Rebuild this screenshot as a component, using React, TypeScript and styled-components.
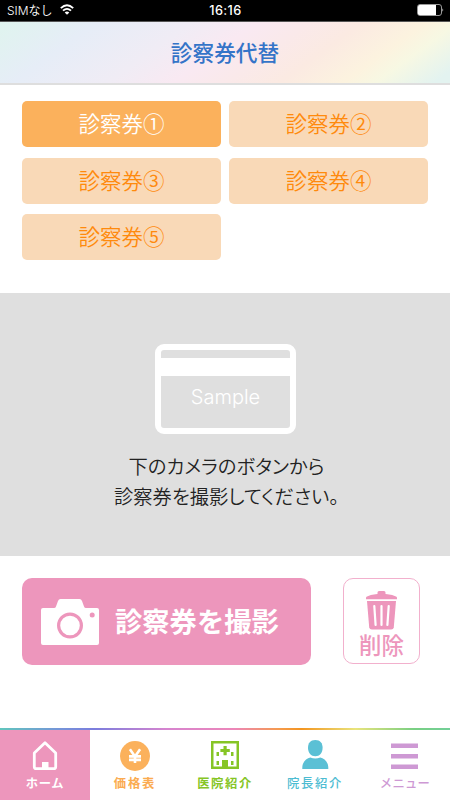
import React, { useState } from "react";
import styled, { createGlobalStyle } from "styled-components";

const GlobalStyle = createGlobalStyle`
  * { box-sizing: border-box; }
  body { margin: 0; background: #fff; }
  button { font: inherit; border: 0; margin: 0; padding: 0; background: none; cursor: pointer; }
  svg { display: block; flex: none; }
`;

const Screen = styled.div`
  width: 450px;
  height: 800px;
  display: flex;
  flex-direction: column;
  overflow: hidden;
  background: #fff;
  font-family: "Noto Sans CJK JP", sans-serif;
`;

const StatusBar = styled.div`
  height: 22px;
  flex: none;
  display: grid;
  grid-template-columns: 1fr auto 1fr;
  align-items: center;
  padding: 0 6px 0 7px;
  background: #000;
  border-bottom: 1px solid #555;
  color: #fff;
  font-family: Inter, "Noto Sans CJK JP", sans-serif;
  font-size: 12px;
  line-height: 21px;
`;

const Carrier = styled.div`
  display: flex;
  align-items: center;
  gap: 7px;
  font-size: 12px;
  font-weight: 350;

  svg {
    margin-top: -2px;
  }
`;

const Clock = styled.div`
  font-weight: 500;
  font-size: 12.7px;
  letter-spacing: 0.4px;
`;

const Battery = styled.div`
  display: flex;
  justify-content: flex-end;
  padding-bottom: 1px;
`;

const Header = styled.header`
  height: 63px;
  flex: none;
  display: flex;
  align-items: center;
  justify-content: center;
  padding-bottom: 2px;
  border-bottom: 2px solid #dedede;
  background: linear-gradient(144deg, #dff4ee 0%, #e6edf7 18%, #f0ecf5 36%, #f9e9f2 48%, #fae9ea 58%, #fbeae2 68%, #fcf3df 80%, #f7f8e3 86%, #e3f3f0 97%);
`;

const Title = styled.h1`
  margin: 0;
  color: #3474c8;
  font-size: 21.7px;
  font-weight: 500;
  line-height: 30px;
`;

const TabGrid = styled.div`
  height: 208px;
  flex: none;
  display: grid;
  grid-template-columns: 199px 199px;
  grid-auto-rows: 46px;
  column-gap: 8px;
  row-gap: 10.5px;
  padding: 16px 22px 0;
`;

const Tab = styled.button<{ $active: boolean }>`
  padding-bottom: 2px;
  border-radius: 5px;
  background: ${(p) => (p.$active ? "#fbb15c" : "#f9d9b7")};
  color: ${(p) => (p.$active ? "#fff" : "#ff8a0c")};
  font-size: 21.5px;
  font-weight: 350;
  line-height: 44px;
`;

const Preview = styled.section`
  height: 263px;
  flex: none;
  display: flex;
  flex-direction: column;
  align-items: center;
  padding-top: 51px;
  background: #dfdfdf;
`;

const CardFrame = styled.div`
  width: 141px;
  height: 90px;
  display: flex;
  flex-direction: column;
  border: 6px solid #fff;
  border-radius: 9px;
  color: #fff;
`;

const CardStripe = styled.div`
  height: 18px;
  margin-top: 8px;
  flex: none;
  background: #fff;
`;

const CardLabel = styled.div`
  padding-left: 1px;
  text-align: center;
  font-family: Inter, sans-serif;
  font-size: 20px;
  font-weight: 300;
  line-height: 42px;
`;

const Hint = styled.p`
  margin: 18px 0 0;
  padding-left: 3px;
  color: #222;
  text-align: center;
  font-size: 19.3px;
  font-weight: 350;
  line-height: 29.5px;
  font-feature-settings: "palt";
  white-space: nowrap;
`;

const Actions = styled.div`
  flex: 1;
  display: flex;
  align-items: flex-start;
  justify-content: space-between;
  padding: 22px 30px 0 22px;
`;

const ShootButton = styled.button`
  width: 289px;
  height: 87px;
  display: flex;
  align-items: center;
  gap: 16px;
  padding-left: 19px;
  border-radius: 10px;
  background: #ed96bc;
  color: #fff;
  font-size: 27.3px;
  font-weight: 700;
`;

const ShootLabel = styled.span`
  padding-bottom: 3px;
`;

const DeleteButton = styled.button`
  width: 77px;
  height: 86px;
  display: flex;
  flex-direction: column;
  align-items: center;
  padding-top: 12px;
  border: 1px solid #f2b0cd;
  border-radius: 10px;
  color: #ed96bc;
  font-size: 22.4px;
  font-weight: 500;
  line-height: 29px;
`;

const Rainbow = styled.div`
  height: 2px;
  flex: none;
  background: linear-gradient(90deg, #61c6bd 0%, #7595d8 13%, #7b7ddd 21%, #d684cf 37%, #ec86b9 52%, #f59a4d 62%, #f39520 67%, #e9e47c 79%, #79cf83 92%, #72cf98 100%);
`;

const Nav = styled.nav`
  height: 70px;
  flex: none;
  display: grid;
  grid-template-columns: repeat(5, 90px);
`;

const NavItem = styled.button<{ $color: string; $active?: boolean }>`
  display: flex;
  flex-direction: column;
  align-items: center;
  padding-top: 9px;
  color: ${(p) => p.$color};
  background: ${(p) => (p.$active ? "#ed96bc" : "#fff")};
`;

const NavLabel = styled.span<{ $spacing: number; $weight: number }>`
  margin-top: 2px;
  font-size: 12.3px;
  font-weight: ${(p) => p.$weight};
  line-height: 18px;
  letter-spacing: ${(p) => p.$spacing}px;
  white-space: nowrap;
`;

const WifiIcon = () => (
  <svg width="14" height="11" viewBox="0 0 14 11" fill="none" stroke="#fff" strokeWidth="1.8">
    <path d="M.8 4.2Q7-1.6 13.2 4.2M3 6.7q4-3.7 8 0" />
    <path d="M4.7 8.5q2.3-2 4.6 0L7 10.8z" fill="#fff" stroke="none" />
  </svg>
);

const BatteryIcon = () => (
  <svg width="27" height="12" viewBox="0 0 27 12">
    <rect x=".5" y=".5" width="24" height="11" rx="2.5" fill="none" stroke="#999" />
    <path d="M2.5 1H19v10H2.5Q1 11 1 9.500V2.500Q1 1 2.500 1z" fill="#fff" />
    <path d="M25.500 4.200q1.500 1.800 0 3.600z" fill="#fff" />
  </svg>
);

const CameraIcon = () => (
  <svg width="58" height="46" viewBox="0 0 58 46">
    <path d="M2 9h11q1.500 0 2-1.500L17 2q.7-2 2.500-2h19q1.800 0 2.500 2l2 5.500Q43.500 9 45 9h11q2 0 2 2v33q0 2-2 2H2q-2 0-2-2V11q0-2 2-2z" fill="#fff" />
    <circle cx="29" cy="26.500" r="11.400" fill="none" stroke="#ed96bc" strokeWidth="3.200" />
    <circle cx="51.200" cy="16" r="2.500" fill="#ed96bc" />
  </svg>
);

const TrashIcon = () => (
  <svg width="31" height="39" viewBox="0 0 31 39" fill="#ed96bc">
    <path d="M0 8.200V7q0-1 1-1.400 3.500-1.800 8.500-2.300l2-.3V1.500Q11.500 0 13 0h5q1.500 0 1.500 1.500V3l2 .3q5 .5 8.500 2.300 1 .4 1 1.400v1.200z" />
    <path d="M1 10h29l-2.200 26.200q-.3 2.300-2.600 2.300H5.800q-2.300 0-2.600-2.300z" />
    <path d="M8.300 15l1.300 19M15.500 15v19M22.700 15l-1.300 19" fill="none" stroke="#fff" strokeWidth="2.200" strokeLinecap="round" />
  </svg>
);

const HomeIcon = () => (
  <svg width="30" height="33" viewBox="0 0 30 33">
    <path d="M15 3.800L4.300 14v13.700q0 2 2 2h17.400q2 0 2-2V14z" fill="none" stroke="#fff" strokeWidth="2.800" strokeLinejoin="round" />
    <path d="M12 23h6.500v7H12z" fill="#fff" />
  </svg>
);

const YenIcon = () => (
  <svg width="30" height="33" viewBox="0 0 30 33">
    <circle cx="15" cy="17" r="15" fill="#fbb15c" />
    <path d="M9.900 10.200L15 17.500l5.100-7.300M9 17.400h12M9 20.900h12M15 17v7" fill="none" stroke="#fff" strokeWidth="2.600" />
  </svg>
);

const ClinicIcon = () => (
  <svg width="30" height="33" viewBox="0 0 30 33" fill="#86c525">
    <path fillRule="evenodd" d="M1 2h28v28H1zM3.500 4.500v23h23v-23z" />
    <path d="M13.500 7h3.200v3h3.100v3h-3.100v3.200h-3.200V13h-3.100v-3h3.100zM12 21h6v8h-6zM6.500 13H9v4H6.500zM21 13h2.500v4H21zM6.500 22H9v4H6.500zM21 22h2.500v4H21z" />
  </svg>
);

const PersonIcon = () => (
  <svg width="30" height="33" viewBox="0 0 30 33" fill="#5bc0d5">
    <path d="M15.300 1c5 0 7.300 3.400 7.300 7.700 0 5-3 8.500-7.300 8.500S8 13.700 8 8.700C8 4.400 10.300 1 15.300 1z" />
    <path d="M2.300 30v-1.500C2.300 23 6.600 19.200 10.300 18.600q5 1.800 10 0c3.700.6 8 4.400 8 9.900V30z" />
  </svg>
);

const MenuIcon = () => (
  <svg width="28" height="33" viewBox="0 0 28 33" fill="#ce99d4">
    <path d="M0 4.500h27V9H0zM0 15h27v4.500H0zM0 25.500h27V30H0z" />
  </svg>
);

const cards = ["診察券①", "診察券②", "診察券③", "診察券④", "診察券⑤"];

const navItems = [
  { label: "ホーム", color: "#fff", spacing: 0.7, weight: 700, Icon: HomeIcon },
  { label: "価格表", color: "#fbab50", spacing: 1.8, weight: 700, Icon: YenIcon },
  { label: "医院紹介", color: "#86c525", spacing: 1.6, weight: 700, Icon: ClinicIcon },
  { label: "院長紹介", color: "#4dbcd2", spacing: 1.7, weight: 500, Icon: PersonIcon },
  { label: "メニュー", color: "#ce99d4", spacing: 0.3, weight: 500, Icon: MenuIcon },
];

export default function App() {
  const [selected, setSelected] = useState(0);
  return (
    <>
      <GlobalStyle />
      <Screen>
        <StatusBar>
          <Carrier>SIMなし<WifiIcon /></Carrier>
          <Clock>16:16</Clock>
          <Battery><BatteryIcon /></Battery>
        </StatusBar>
        <Header><Title>診察券代替</Title></Header>
        <TabGrid>
          {cards.map((card, i) => (
            <Tab key={card} $active={i === selected} onClick={() => setSelected(i)}>{card}</Tab>
          ))}
        </TabGrid>
        <Preview>
          <CardFrame>
            <CardStripe />
            <CardLabel>Sample</CardLabel>
          </CardFrame>
          <Hint>下のカメラのボタンから<br />診察券を撮影してください。</Hint>
        </Preview>
        <Actions>
          <ShootButton><CameraIcon /><ShootLabel>診察券を撮影</ShootLabel></ShootButton>
          <DeleteButton><TrashIcon />削除</DeleteButton>
        </Actions>
        <Rainbow />
        <Nav>
          {navItems.map(({ label, color, spacing, weight, Icon }, i) => (
            <NavItem key={label} $color={color} $active={i === 0}>
              <Icon />
              <NavLabel $spacing={spacing} $weight={weight}>{label}</NavLabel>
            </NavItem>
          ))}
        </Nav>
      </Screen>
    </>
  );
}
